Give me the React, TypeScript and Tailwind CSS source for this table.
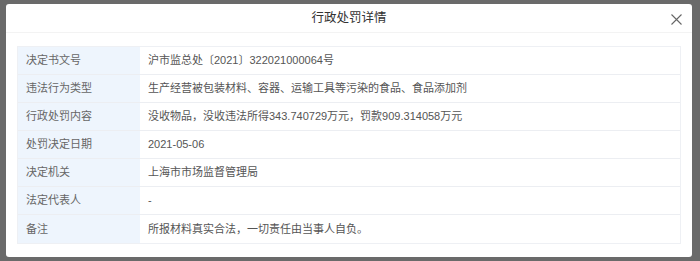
const rows: [string, string][] = [
  ["决定书文号", "沪市监总处〔2021〕322021000064号"],
  ["违法行为类型", "生产经营被包装材料、容器、运输工具等污染的食品、食品添加剂"],
  ["行政处罚内容", "没收物品，没收违法所得343.740729万元，罚款909.314058万元"],
  ["处罚决定日期", "2021-05-06"],
  ["决定机关", "上海市市场监督管理局"],
  ["法定代表人", "-"],
  ["备注", "所报材料真实合法，一切责任由当事人自负。"],
];

export default function App() {
  return (
    <div
      className="w-[700px] h-[261px] overflow-hidden bg-[#6a6a6a] pt-[4px] pl-[6px]"
      style={{ fontFamily: '"Liberation Sans", "Noto Sans CJK SC", sans-serif' }}
    >
      <div className="w-[686px] h-[253px] bg-white rounded-[3px] flex flex-col">
        <div className="h-[29px] flex items-center justify-center relative border-b border-[#f3f3f3]">
          <span className="text-[12.5px] text-[#333] leading-none">行政处罚详情</span>
          <svg
            className="absolute right-[10px] top-[10px]"
            width="11"
            height="11"
            viewBox="0 0 11 11"
            fill="none"
            stroke="#666"
            strokeWidth="1.1"
          >
            <path d="M0.5 0.5L10.5 10.5M10.5 0.5L0.5 10.5" />
          </svg>
        </div>
        <div className="mt-[13px] mx-[11px] border border-[#eef0f4]">
          {rows.map(([label, value], i) => (
            <div
              key={label}
              className={
                i === rows.length - 1
                  ? "flex h-[28px] text-[11px] leading-none"
                  : "flex h-[28px] text-[11px] leading-none border-b border-[#eceef2]"
              }
            >
              <div className="w-[122px] shrink-0 bg-[#eef5fd] text-[#666] flex items-center pl-[8px]">
                {label}
              </div>
              <div className="flex-1 flex items-center pl-[8px] text-[#555]">{value}</div>
            </div>
          ))}
        </div>
      </div>
    </div>
  );
}
